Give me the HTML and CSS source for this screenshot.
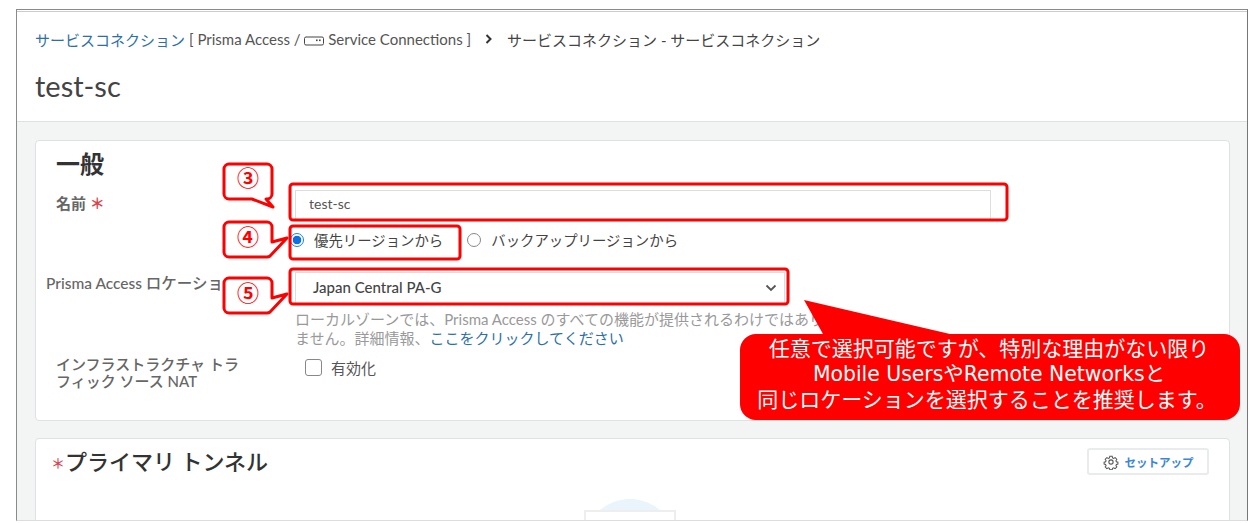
FILE: index.html
```html
<!DOCTYPE html>
<html lang="ja">
<head>
<meta charset="utf-8">
<title>test-sc</title>
<link rel="stylesheet" href="styles.css">
</head>
<body>
<div class="frame">
  <header class="head">
    <nav class="crumbs">
      <a class="link">サービスコネクション</a>
      <span class="crumb-path">[ Prisma Access /
        <svg class="ico-sc" viewBox="0 0 20 10" width="20" height="10"><rect x="0.5" y="1" width="19" height="8" rx="1.5" fill="none" stroke="#444"/><rect x="12" y="3.5" width="1.6" height="1.6" fill="#444"/><rect x="15" y="3.5" width="1.6" height="1.6" fill="#444"/></svg>
        Service Connections ]</span>
      <svg class="ico-chev" viewBox="0 0 8 10" width="8" height="10"><path d="M1.5 1l4 4-4 4" fill="none" stroke="#333" stroke-width="2"/></svg>
      <span class="crumb-cur">サービスコネクション - サービスコネクション</span>
    </nav>
    <h1 class="title">test-sc</h1>
  </header>
  <main class="body">
    <section class="card card-general">
      <h2 class="h-general">一般</h2>
      <div class="form">
        <div class="lbl lbl-name">名前 <span class="req">＊</span></div>
        <div class="fld"><div class="input">test-sc</div></div>

        <div class="lbl"></div>
        <div class="fld radios">
          <label class="radio"><span class="dot on"></span>優先リージョンから</label>
          <label class="radio"><span class="dot"></span>バックアップリージョンから</label>
        </div>

        <div class="lbl lbl-loc">Prisma Access ロケーション</div>
        <div class="fld">
          <div class="select">Japan Central PA-G
            <svg class="ico-down" viewBox="0 0 12 8" width="12" height="8"><path d="M1.5 1.5L6 6l4.5-4.5" fill="none" stroke="#555" stroke-width="1.8"/></svg>
          </div>
          <p class="help">ローカルゾーンでは、Prisma Access のすべての機能が提供されるわけではあり<br>ません。詳細情報、<a class="link">ここをクリックしてください</a></p>
        </div>

        <div class="lbl lbl-nat">インフラストラクチャ トラフィック ソース NAT</div>
        <div class="fld check"><span class="box"></span>有効化</div>
      </div>
    </section>
    <section class="card card-tunnel">
      <div class="tunnel-head">
        <h2 class="h-tunnel"><span class="req">＊</span>プライマリ トンネル</h2>
        <button class="btn">
          <svg viewBox="0 0 24 24" width="16" height="16"><circle cx="12" cy="12" r="3.2" fill="none" stroke="#555" stroke-width="1.6"/><path d="M10 2.5h4l.6 2.8 1.9.8 2.4-1.5 2.8 2.8-1.5 2.4.8 1.9 2.5.6v3.2l-2.5.6-.8 1.9 1.5 2.4-2.8 2.8-2.4-1.5-1.9.8-.6 2.3h-4l-.6-2.3-1.9-.8-2.4 1.5-2.8-2.8 1.5-2.4-.8-1.9-2.5-.6v-3.2l2.5-.6.8-1.9-1.5-2.4 2.8-2.8 2.4 1.5 1.9-.8z" transform="translate(1.2 1.2) scale(.9)" fill="none" stroke="#555" stroke-width="1.7"/></svg>
          セットアップ
        </button>
      </div>
      <div class="illus"><div class="illus-sun"></div><div class="illus-box"></div></div>
    </section>
  </main>
</div>

<svg class="marks" viewBox="0 0 1255 523" width="1255" height="523">
  <g fill="none" stroke="#f00" stroke-width="3">
    <rect x="290" y="184" width="717" height="36" rx="3"/>
    <rect x="290" y="226" width="170" height="33" rx="3"/>
    <rect x="290" y="269" width="498" height="35" rx="3"/>
  </g>
  <g fill="#fff" stroke="#f00" stroke-width="3" stroke-linejoin="round">
    <path d="M229 164h38a5 5 0 0 1 5 5v25a5 5 0 0 1-5 5h-1l7 8-21-8h-23a5 5 0 0 1-5-5v-25a5 5 0 0 1 5-5z"/>
    <path d="M229 222h38a5 5 0 0 1 5 5v15l15-4-17 18a5 5 0 0 1-3 1h-38a5 5 0 0 1-5-5v-25a5 5 0 0 1 5-5z"/>
    <path d="M229 278h38a5 5 0 0 1 5 5v15l15-4-17 18a5 5 0 0 1-3 1h-38a5 5 0 0 1-5-5v-25a5 5 0 0 1 5-5z"/>
  </g>
  <path d="M804 300L950 334H1224a16 16 0 0 1 16 16v54a16 16 0 0 1-16 16H756a16 16 0 0 1-16-16v-54a16 16 0 0 1 16-16h67z" fill="#f00"/>
  <g class="num">
    <text x="248" y="186">③</text>
    <text x="248" y="245">④</text>
    <text x="248" y="301">⑤</text>
  </g>
  <g class="note">
    <text x="989" y="356">任意で選択可能ですが、特別な理由がない限り</text>
    <text class="note-latin" x="989" y="381">Mobile UsersやRemote Networksと</text>
    <text x="987" y="407">同じロケーションを選択することを推奨します。</text>
  </g>
</svg>
</body>
</html>
```

FILE: styles.css
```css
* { box-sizing: border-box; }
html, body { margin: 0; padding: 0; background: #fff; }
body {
  width: 1255px;
  height: 523px;
  overflow: hidden;
  position: relative;
  font-family: Lato, "Noto Sans CJK JP", sans-serif;
  color: #555;
}
.frame {
  margin: 9px 0 0 16px;
  width: 1232px;
  height: 512px;
  border: 1px solid #8a8a8a;
  border-bottom: 1px solid #ddd;
  border-right-color: #777;
  display: flex;
  flex-direction: column;
  overflow: hidden;
}
.head {
  height: 111px;
  flex: none;
  padding: 17px 18px 0;
  background: #fff;
  border-top: 1px solid #ccc;
  margin-top: 1px;
  border-bottom: 1px solid #dfe1e1;
}
.crumbs { display: flex; align-items: center; font-size: 15px; height: 20px; white-space: nowrap; }
.link { color: #2e6fa5; }
.crumb-path { margin-left: 4px; color: #555; }
.ico-sc { vertical-align: -1px; }
.ico-chev { margin: 0 14px; }
.crumb-cur { color: #444; }
.title { margin: 20px 0 0; font-size: 29px; font-weight: 400; line-height: 34px; color: #444; }
.body { flex: 1; background: #f3f5f5; padding: 18px 17px 0 18px; overflow: hidden; min-height: 0; }
.card { background: #fff; border: 1px solid #dfe2e2; border-radius: 4px; }
.card-general { height: 281px; padding: 9px 20px 0; }
.h-general { margin: 0; font-size: 24px; line-height: 28px; font-weight: 700; color: #333; }
.form {
  display: grid;
  grid-template-columns: 239px 696px;
  grid-template-rows: 32px 50px auto auto;
  margin-top: 12px;
  font-size: 15px;
}
.lbl { font-weight: 500; color: #666; line-height: 17px; }
.lbl-name { padding-top: 5px; font-weight: 700; font-size: 15px; }
.req { color: #d9434e; }
.lbl-loc { margin-left: -10px; padding-top: 3px; white-space: nowrap; font-size: 15.5px; }
.lbl-nat { width: 190px; margin-top: 8px; }
.input {
  height: 30px;
  border: 1px solid #ddd;
  line-height: 26px;
  padding-left: 13px;
  font-size: 14px;
  color: #555;
}
.radios { display: flex; align-items: center; gap: 24px; height: 35px; font-size: 14.4px; margin-left: -5px; }
.radio { display: flex; align-items: center; gap: 10px; color: #444; }
.dot { width: 14px; height: 14px; border: 1.5px solid #888; border-radius: 50%; background: #fff; }
.dot.on { border-color: #1a7fe8; background: radial-gradient(circle, #0d6fe0 0 4px, #fff 4.6px); }
.select {
  position: relative;
  width: 490px;
  height: 32px;
  line-height: 28px;
  border: 1px solid #ddd;
  padding-left: 17px;
  font-size: 15px;
  font-weight: 500;
  color: #444;
}
.ico-down { position: absolute; right: 7px; top: 11px; }
.help { margin: 6px 0 0; font-size: 15px; line-height: 19px; color: #999; white-space: nowrap; }
.check { display: flex; align-items: center; gap: 9px; height: 20px; margin: 9px 0 0 10px; font-size: 15px; color: #555; }
.box { width: 17px; height: 17px; border: 1.5px solid #888; border-radius: 3px; }
.card-tunnel { position: relative; height: 120px; margin-top: 17px; padding: 8px 20px 0 15px; }
.tunnel-head { display: flex; justify-content: space-between; align-items: flex-start; }
.h-tunnel { margin: 0; font-size: 22px; line-height: 30px; font-weight: 500; color: #333; }
.h-tunnel .req { font-size: 14px; vertical-align: 2px; }
.btn {
  display: flex;
  align-items: center;
  gap: 6px;
  height: 27px;
  width: 122px;
  margin-top: 1px;
  justify-content: center;
  background: #fff;
  border: 2px solid #e9ecec;
  border-radius: 3px;
  font: 700 11.5px "Noto Sans CJK JP", sans-serif;
  color: #3c86d6;
  padding: 0;
}
.illus { position: absolute; left: 548px; top: 60px; width: 92px; height: 30px; }
.illus-sun { position: absolute; left: 0; top: 0; width: 92px; height: 92px; border-radius: 50%; background: #eaf4fc; }
.illus-box { position: absolute; left: 0; top: 11px; width: 92px; height: 30px; background: #fff; border: 2px solid #eee; border-bottom: 0; }
.marks { position: absolute; left: 0; top: 0; }
.num text { font: 700 22px "Noto Sans CJK JP", sans-serif; fill: #f00; text-anchor: middle; }
.note text { font: 400 21px "DejaVu Sans", "Noto Sans CJK JP", sans-serif; fill: #fff; text-anchor: middle; }
.note .note-latin { font-size: 20.4px; }
```
